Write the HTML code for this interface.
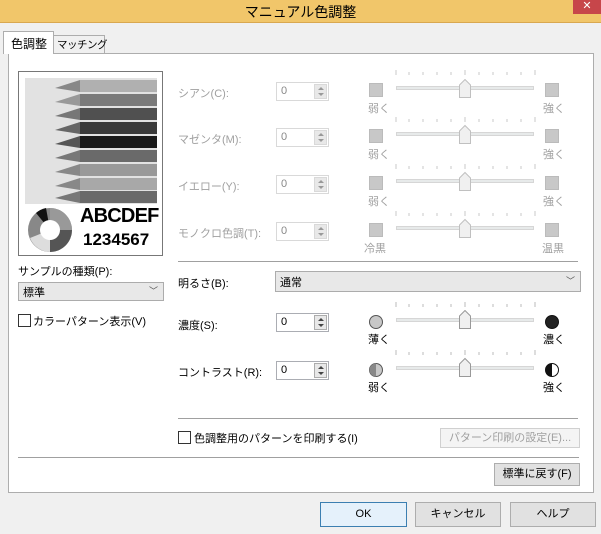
<!DOCTYPE html>
<html><head><meta charset="utf-8"><style>
*{margin:0;padding:0;box-sizing:border-box}
body{width:601px;height:534px;background:#f0f0f0;position:relative;overflow:hidden;font-family:"Liberation Sans","Noto Sans CJK JP",sans-serif;font-size:11px;color:#000}
.a{position:absolute;white-space:nowrap}
.dis{color:#a0a0a0}
.spin{position:absolute;width:53px;height:19px;border:1px solid #abadb3;background:#fff}
.spin span{position:absolute;left:4px;top:2px;font-size:11px}
.spin i{position:absolute;right:1px;top:1px;width:13px;height:15px;border:1px solid #acacac;background:#e8e8e8}
.spin i:before{content:"";position:absolute;left:3px;top:2px;border:3px solid transparent;border-bottom:3px solid #444;border-top:0}
.spin i:after{content:"";position:absolute;left:3px;top:8px;border:3px solid transparent;border-top:3px solid #444;border-bottom:0}
.spin.d{border-color:#d9d9d9}.spin.d i{border-color:#d9d9d9}.spin.d i:before{border-bottom-color:#999}.spin.d i:after{border-top-color:#999}.spin.d span{color:#888}
.sq{position:absolute;width:14px;height:14px;background:#c8c8c8;border:1px solid #bbb}
.track{position:absolute;width:138px;height:4px;background:#e7eaea;border:1px solid #d6d6d6}
.btn{position:absolute;border:1px solid #adadad;background:#e1e1e1;text-align:center;font-size:11px}
.sep{position:absolute;height:1px;background:#a0a0a0}
.cb{position:absolute;width:13px;height:13px;border:1px solid #333;background:#fff}
</style></head><body>
<div class="a" style="left:0;top:0;width:601px;height:23px;background:#f1c66a;border-bottom:1px solid #d9a850"></div>
<div class="a" style="left:0;top:2px;width:601px;text-align:center;font-size:14px">マニュアル色調整</div>
<div class="a" style="left:573px;top:0;width:28px;height:14px;background:#c7464a;color:#fff;text-align:center;font-size:11px;line-height:13px">✕</div>

<div class="a" style="left:8px;top:53px;width:586px;height:440px;background:#fff;border:1px solid #adadad"></div>
<div class="a" style="left:3px;top:31px;width:51px;height:23px;background:#fff;border:1px solid #adadad;border-bottom:none;font-size:12px;padding:3px 0 0 7px">色調整</div>
<div class="a" style="left:54px;top:35px;width:51px;height:18px;background:#f0f0f0;border:1px solid #adadad;border-bottom:none;border-left:none;font-size:10.5px;padding:1px 0 0 3px;letter-spacing:-0.5px">マッチング</div>

<div class="a" style="left:18px;top:71px;width:145px;height:185px;border:1px solid #777;background:#fff"></div>
<svg class="a" style="left:25px;top:78px" width="132" height="126" viewBox="0 0 132 126">
<rect width="132" height="126" fill="#e2e2e2"/>
<g>
<rect x="55" y="2" width="77" height="12" fill="#b0b0b0"/><polygon points="30,10 55,2 55,14" fill="#888"/>
<rect x="55" y="16" width="77" height="12" fill="#7a7a7a"/><polygon points="30,24 55,16 55,28" fill="#999"/>
<rect x="55" y="30" width="77" height="12" fill="#505050"/><polygon points="30,38 55,30 55,42" fill="#777"/>
<rect x="55" y="44" width="77" height="12" fill="#3a3a3a"/><polygon points="30,52 55,44 55,56" fill="#666"/>
<rect x="55" y="58" width="77" height="12" fill="#1a1a1a"/><polygon points="30,66 55,58 55,70" fill="#555"/>
<rect x="55" y="72" width="77" height="12" fill="#6a6a6a"/><polygon points="30,80 55,72 55,84" fill="#777"/>
<rect x="55" y="86" width="77" height="12" fill="#999"/><polygon points="30,94 55,86 55,98" fill="#888"/>
<rect x="55" y="100" width="77" height="12" fill="#a8a8a8"/><polygon points="30,108 55,100 55,112" fill="#888"/>
<rect x="55" y="113" width="77" height="12" fill="#6a6a6a"/><polygon points="30,120 55,113 55,125" fill="#777"/>
</g></svg>
<svg class="a" style="left:26px;top:206px" width="48" height="48" viewBox="0 0 48 48">
<circle cx="24" cy="24" r="22" fill="#888"/>
<path d="M24 2A22 22 0 0 1 46 24L24 24Z" fill="#999"/>
<path d="M24 24L46 24A22 22 0 0 1 24 46Z" fill="#555"/>
<path d="M24 24L24 46A22 22 0 0 1 4 32Z" fill="#ddd"/>
<path d="M24 24L10 7A22 22 0 0 1 20 2Z" fill="#111"/>
<circle cx="24" cy="24" r="10" fill="#fff"/>
</svg>
<div class="a" style="left:80px;top:205px;font-size:20px;font-weight:bold;letter-spacing:-0.8px">ABCDEF</div>
<div class="a" style="left:83px;top:230px;font-size:17px;font-weight:bold">1234567</div>

<div class="a" style="left:18px;top:263px">サンプルの種類(P):</div>
<div class="a" style="left:18px;top:282px;width:146px;height:19px;border:1px solid #acacac;background:#e8e8e8;padding:1px 0 0 4px">標準<span style="position:absolute;right:5px;top:1px;color:#555;font-size:9px">﹀</span></div>
<div class="cb" style="left:18px;top:314px"></div>
<div class="a" style="left:33px;top:313px">カラーパターン表示(V)</div>

<div class="a dis" style="left:178px;top:85px">シアン(C):</div>
<div class="a dis" style="left:178px;top:131px">マゼンタ(M):</div>
<div class="a dis" style="left:178px;top:178px">イエロー(Y):</div>
<div class="a dis" style="left:178px;top:225px">モノクロ色調(T):</div>

<div class="spin d" style="left:276px;top:82px"><span>0</span><i></i></div>
<div class="spin d" style="left:276px;top:128px"><span>0</span><i></i></div>
<div class="spin d" style="left:276px;top:175px"><span>0</span><i></i></div>
<div class="spin d" style="left:276px;top:222px"><span>0</span><i></i></div>

<div class="sq" style="left:369px;top:83px"></div><div class="sq" style="left:545px;top:83px"></div>
<div class="sq" style="left:369px;top:129px"></div><div class="sq" style="left:545px;top:129px"></div>
<div class="sq" style="left:369px;top:176px"></div><div class="sq" style="left:545px;top:176px"></div>
<div class="sq" style="left:369px;top:223px"></div><div class="sq" style="left:545px;top:223px"></div>
<div class="a dis" style="left:368px;top:100px">弱く</div><div class="a dis" style="left:543px;top:100px">強く</div>
<div class="a dis" style="left:368px;top:146px">弱く</div><div class="a dis" style="left:543px;top:146px">強く</div>
<div class="a dis" style="left:368px;top:193px">弱く</div><div class="a dis" style="left:543px;top:193px">強く</div>
<div class="a dis" style="left:364px;top:240px">冷黒</div><div class="a dis" style="left:542px;top:240px">温黒</div>

<svg class="a" style="left:395px;top:70px" width="142" height="200">
<g stroke="#c8c8c8" stroke-width="1">
<g id="t"><path d="M1 0v5M14 2v3M28 2v3M42 2v3M56 2v3M70 0v5M84 2v3M98 2v3M112 2v3M126 2v3M140 0v5"/></g>
<use href="#t" y="47"/><use href="#t" y="94"/><use href="#t" y="141"/>
</g></svg>
<svg class="a" style="left:395px;top:302px" width="142" height="90">
<g stroke="#bbb"><g id="t2"><path d="M1 0v5M14 2v3M28 2v3M42 2v3M56 2v3M70 0v5M84 2v3M98 2v3M112 2v3M126 2v3M140 0v5"/></g><use href="#t2" y="48"/></g></svg>

<div class="track" style="left:396px;top:86px"></div>
<div class="track" style="left:396px;top:132px"></div>
<div class="track" style="left:396px;top:179px"></div>
<div class="track" style="left:396px;top:226px"></div>
<div class="track" style="left:396px;top:318px"></div>
<div class="track" style="left:396px;top:366px"></div>
<svg class="a" style="left:458px;top:79px" width="14" height="250">
<g fill="#f0f0f0" stroke="#c0c0c0"><path id="th" d="M1.5 6L7 0.5L12.5 6V18.5H1.5Z"/>
<use href="#th" y="46"/><use href="#th" y="93"/><use href="#th" y="140"/></g>
</svg>
<svg class="a" style="left:458px;top:310px" width="14" height="80">
<g fill="#f0f0f0" stroke="#999"><path id="th2" d="M1.5 6L7 0.5L12.5 6V18.5H1.5Z"/><use href="#th2" y="48"/></g></svg>

<div class="sep" style="left:178px;top:261px;width:400px"></div>

<div class="a" style="left:178px;top:275px">明るさ(B):</div>
<div class="a" style="left:275px;top:271px;width:306px;height:21px;border:1px solid #acacac;background:#e8e8e8;padding:2px 0 0 4px">通常<span style="position:absolute;right:5px;top:2px;color:#555;font-size:9px">﹀</span></div>

<div class="a" style="left:178px;top:317px">濃度(S):</div>
<div class="a" style="left:178px;top:364px">コントラスト(R):</div>
<div class="spin" style="left:276px;top:313px"><span>0</span><i></i></div>
<div class="spin" style="left:276px;top:361px"><span>0</span><i></i></div>
<svg class="a" style="left:368px;top:314px" width="200" height="65">
<circle cx="8" cy="8" r="6.5" fill="#c8c8c8" stroke="#555"/>
<circle cx="184" cy="8" r="6.5" fill="#222" stroke="#111"/>
<circle cx="8" cy="56" r="6.5" fill="#c8c8c8" stroke="#555"/>
<path d="M8 49.5A6.5 6.5 0 0 0 8 62.5Z" fill="#888"/>
<circle cx="184" cy="56" r="6.5" fill="#fff" stroke="#111"/>
<path d="M184 49.5A6.5 6.5 0 0 0 184 62.5Z" fill="#111"/>
</svg>
<div class="a" style="left:368px;top:331px">薄く</div><div class="a" style="left:543px;top:331px">濃く</div>
<div class="a" style="left:368px;top:379px">弱く</div><div class="a" style="left:543px;top:379px">強く</div>

<div class="sep" style="left:178px;top:418px;width:400px"></div>
<div class="cb" style="left:178px;top:431px"></div>
<div class="a" style="left:194px;top:430px">色調整用のパターンを印刷する(I)</div>
<div class="btn dis" style="left:440px;top:428px;width:140px;height:20px;border-color:#d0d0d0;background:#f4f4f4;line-height:18px">パターン印刷の設定(E)...</div>

<div class="sep" style="left:18px;top:457px;width:561px"></div>
<div class="btn" style="left:494px;top:463px;width:86px;height:23px;line-height:21px">標準に戻す(F)</div>

<div class="btn" style="left:320px;top:502px;width:87px;height:25px;line-height:23px;border-color:#3c7fb1;background:#e5f1fb">OK</div>
<div class="btn" style="left:415px;top:502px;width:86px;height:25px;line-height:23px">キャンセル</div>
<div class="btn" style="left:510px;top:502px;width:86px;height:25px;line-height:23px">ヘルプ</div>
</body></html>
